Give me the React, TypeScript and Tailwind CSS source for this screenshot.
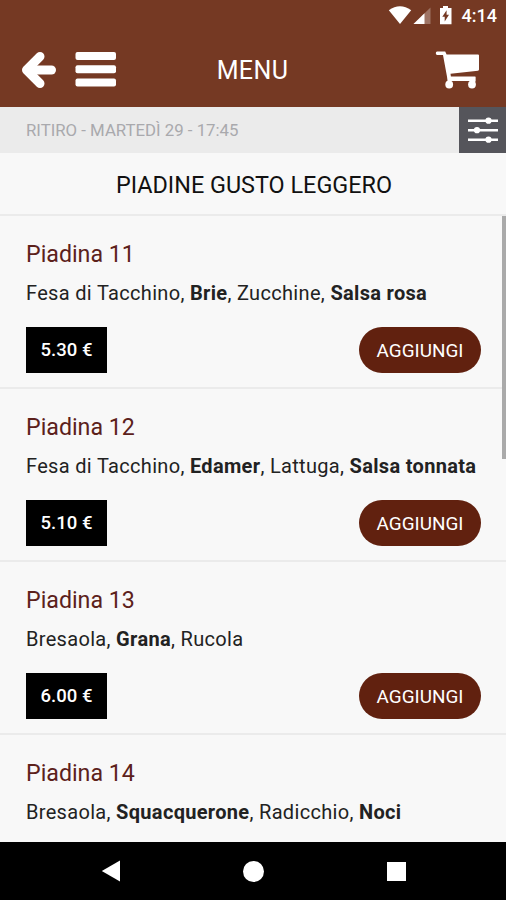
import type { ReactNode } from 'react'

// ─── Data ─────────────────────────────────────────────────────
interface Piadina {
  name: string
  price?: string
  ingredients: ReactNode
}

const piadine: Piadina[] = [
  { name: 'Piadina 11', price: '5.30 €', ingredients: <>Fesa di Tacchino, <b>Brie</b>, Zucchine, <b>Salsa rosa</b></> },
  { name: 'Piadina 12', price: '5.10 €', ingredients: <>Fesa di Tacchino, <b>Edamer</b>, Lattuga, <b>Salsa tonnata</b></> },
  { name: 'Piadina 13', price: '6.00 €', ingredients: <>Bresaola, <b>Grana</b>, Rucola</> },
  { name: 'Piadina 14', ingredients: <>Bresaola, <b>Squacquerone</b>, Radicchio, <b>Noci</b></> },
]

// ─── Icons ────────────────────────────────────────────────────
const BackIcon = () => (
  <svg width="36" height="40" viewBox="0 0 36 40" fill="none" stroke="#fff" strokeWidth="9" strokeLinecap="round" strokeLinejoin="round">
    <path d="M20 6.500 6.500 20 20 33.500" />
    <path d="M9 20h22.500" />
  </svg>
)

const MenuIcon = () => (
  <svg width="42" height="36" viewBox="0 0 42 36" fill="#fff">
    <rect x="0.500" y="0" width="40.500" height="8" rx="2" />
    <rect x="0.500" y="13.200" width="40.500" height="8" rx="2" />
    <rect x="0.500" y="26.400" width="40.500" height="8" rx="2" />
  </svg>
)

const CartIcon = () => (
  <svg width="45" height="40" viewBox="0 0 45 40" fill="#fff">
    <path d="M2.200 1.500h8l1.400 3H43q1 0 1 1V19.500q0 1-1 1.200L15.500 23.800l.4 2.700H40.400v4.500H12.800L8 5H2.200Q.8 5 .8 3.200T2.200 1.500Z" />
    <circle cx="14.200" cy="34.500" r="3.900" />
    <circle cx="37" cy="34.500" r="3.900" />
    <path d="M12.700 27h3.200v6h-3.200ZM36.800 27h3.600v5h-3.600Z" />
  </svg>
)

const FilterIcon = () => (
  <svg width="32" height="30" viewBox="0 0 32 30" fill="#fff">
    <path d="M1 4.500h30v2.400H1ZM1 14h30v2.400H1ZM1 23.500h30v2.400H1Z" />
    <circle cx="21.500" cy="5.700" r="3.100" />
    <circle cx="10" cy="15.200" r="3.100" />
    <circle cx="21.500" cy="24.700" r="3.100" />
  </svg>
)

// ─── Status Bar ───────────────────────────────────────────────
const StatusBar = () => (
  <div className="flex h-8 items-center justify-end pr-[9px] text-white">
    <svg width="66" height="20" viewBox="0 0 66 20" fill="#fff">
      <path d="M.8 4.200Q12 -3.800 23.200 4.200L12 18Z" />
      <path d="M42.500 1.500V18H25.500Z" opacity=".3" />
      <path d="M36.500 7.300V18H25.500Z" />
      <path fillRule="evenodd" d="M55 0h5v2h3.500v16.300H52V2h3ZM58.600 4.300l-4.300 6.500h2.400v4.700l4.300-6.700h-2.400Z" />
    </svg>
    <span className="ml-2 text-[18px] leading-5 font-medium">4:14</span>
  </div>
)

// ─── Menu Row ─────────────────────────────────────────────────
const PiadinaRow = ({ name, price, ingredients }: Piadina) => (
  <li className="h-[173px] shrink-0 border-b-2 border-[#ebebeb] px-[26px] pt-[23px]">
    <h3 className="text-[23.200px] leading-[30px] text-[#5c211b]">{name}</h3>
    <p className="mt-3 text-[20px] leading-6 tracking-[0.320px] whitespace-nowrap text-[#222]">{ingredients}</p>
    {price && (
      <div className="mt-[22px] flex items-center justify-between">
        <span className="flex h-[46px] w-[81px] items-center justify-center bg-black pt-0.5 text-[18.500px] font-medium text-white">
          {price}
        </span>
        <button className="-mr-[1px] h-[46px] w-[122px] rounded-full bg-[#61210f] pt-0.5 text-[18.900px] text-white">
          AGGIUNGI
        </button>
      </div>
    )}
  </li>
)

// ─── Main Component ───────────────────────────────────────────
const App = () => (
  <div className="flex h-[900px] w-[506px] flex-col overflow-hidden bg-[#f8f8f8] font-['Roboto',sans-serif]">
    <header className="h-[107px] shrink-0 bg-[#753923]">
      <StatusBar />
      <div className="grid h-[74px] grid-cols-3 items-center pt-0.5 pr-[26px] pl-5">
        <div className="flex items-center gap-[19px]">
          <BackIcon />
          <MenuIcon />
        </div>
        <h1 className="pt-0.5 pl-[5px] text-center text-[25px] tracking-[0.400px] text-white">MENU</h1>
        <div className="flex justify-end">
          <CartIcon />
        </div>
      </div>
    </header>

    <div className="flex h-[46px] shrink-0 items-stretch justify-between bg-[#ebebeb]">
      <p className="flex items-center pt-0.5 pl-[26px] text-[16.800px] text-[#a9a9ad]">RITIRO - MARTEDÌ 29 - 17:45</p>
      <button className="flex w-[47px] items-center justify-center bg-[#55555b]">
        <FilterIcon />
      </button>
    </div>

    <h2 className="flex h-[63px] shrink-0 items-center justify-center border-b-2 border-[#ebebeb] pt-1 pl-0.5 text-[23.400px] text-[#111]">
      PIADINE GUSTO LEGGERO
    </h2>

    <main className="relative min-h-0 flex-1 overflow-hidden">
      <ul className="flex flex-col">
        {piadine.map((item) => (
          <PiadinaRow key={item.name} {...item} />
        ))}
      </ul>
      {/* scroll thumb over the list */}
      <div className="absolute top-0 right-0 h-[243px] w-1 bg-[#aaa]" />
    </main>

    <nav className="grid h-[58px] shrink-0 grid-cols-3 items-center bg-black px-10">
      <svg width="20" height="22" viewBox="0 0 20 22" className="justify-self-center" fill="#fff">
        <path d="M19 .5v21L.8 11Z" />
      </svg>
      <span className="size-[21px] justify-self-center rounded-full bg-white" />
      <span className="ml-0.5 size-[19px] justify-self-center bg-white" />
    </nav>
  </div>
)

export default App
